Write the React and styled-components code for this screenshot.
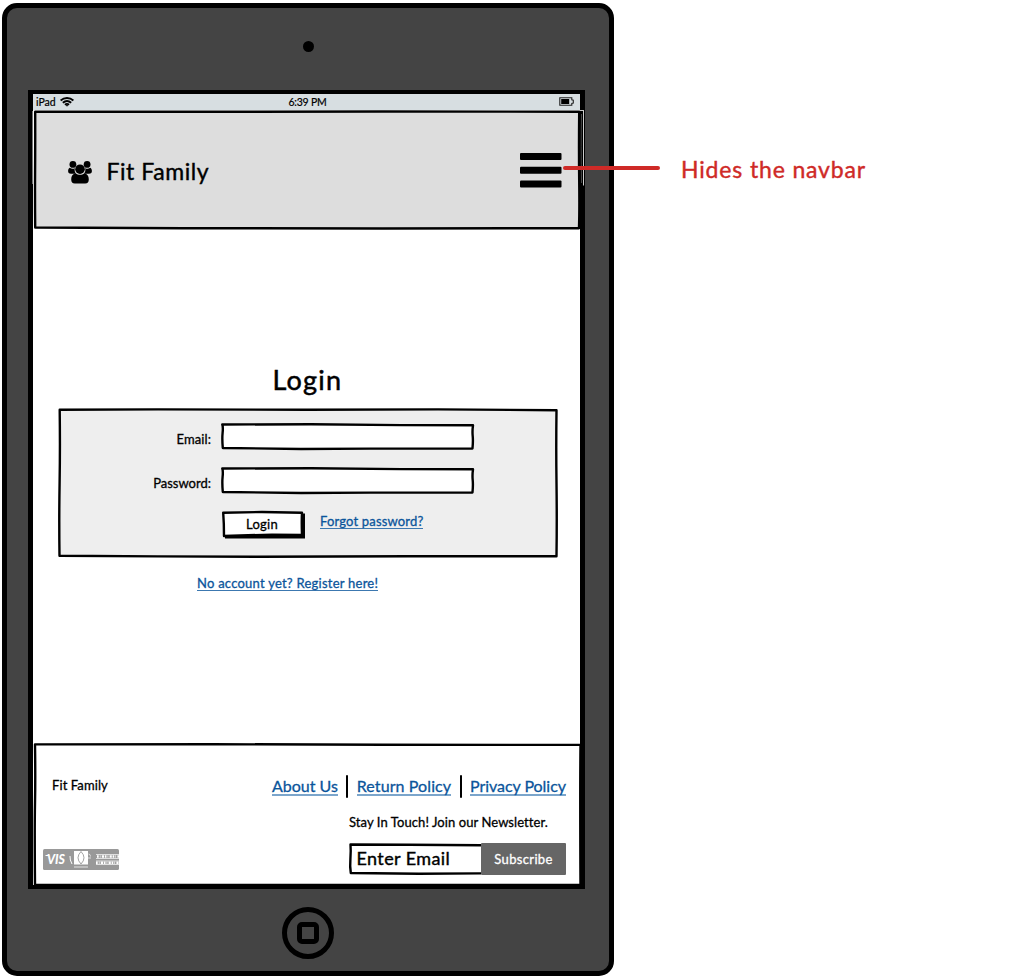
import React from "react";
import styled, { createGlobalStyle } from "styled-components";

const Global = createGlobalStyle`
  * { box-sizing: border-box; }
  body { margin: 0; background: #fff; color: #000; font-family: Lato, "Liberation Sans", sans-serif; }
`;

const Page = styled.div`
  display: flex;
  align-items: flex-start;
  padding: 3px 0 0 2px;
  width: 1025px;
  height: 978px;
  overflow: hidden;
`;

const Device = styled.div`
  display: flex;
  flex-direction: column;
  align-items: center;
  flex: none;
  width: 612px;
  height: 973px;
  border: 5px solid #000;
  border-radius: 15px;
  background: #444;
`;

const TopBezel = styled.div`
  display: flex;
  flex: none;
  height: 82px;
  padding: 32.5px 0 0 0;
`;

const Camera = styled.div`
  width: 11px;
  height: 11px;
  border-radius: 50%;
  background: #000;
`;

const Screen = styled.div`
  display: flex;
  flex-direction: column;
  flex: none;
  width: 557px;
  height: 799px;
  margin-right: 3px;
  border: 5px solid #000;
  border-width: 4px 5px;
  background: #fff;
`;

const HomeButton = styled.div`
  display: flex;
  align-items: center;
  justify-content: center;
  width: 52px;
  height: 52px;
  margin: 18px 1px 0 0;
  border: 5px solid #000;
  border-radius: 50%;
`;

const HomeGlyph = styled.div`
  width: 22px;
  height: 22px;
  border: 5px solid #000;
  border-radius: 5px;
`;

const Text = styled.span`
  display: block;
  font-size: ${(p) => p.$size}px;
  line-height: ${(p) => p.$line || 16}px;
  letter-spacing: ${(p) => p.$track || 0}px;
  color: ${(p) => p.$color || "#000"};
  -webkit-text-stroke: ${(p) => p.$stroke ?? 0.3}px currentColor;
  white-space: nowrap;
`;

const Link = styled.a`
  align-self: flex-start;
  font-size: ${(p) => p.$size}px;
  line-height: ${(p) => p.$line}px;
  letter-spacing: ${(p) => p.$track || 0}px;
  color: #0b559b;
  -webkit-text-stroke: 0.3px currentColor;
  border-bottom: ${(p) => p.$rule || 1}px solid ${(p) => (p.$rule ? "#7ba5cb" : "#3c78b0")};
  white-space: nowrap;
`;

const StatusBar = styled.div`
  display: grid;
  grid-template-columns: 1fr auto 1fr;
  align-items: center;
  flex: none;
  height: 16px;
  padding: 0 6px 1px 3px;
  background: #d7dee1;
`;

const StatusLeft = styled.div`
  display: flex;
  align-items: center;
  gap: 4px;
`;

const StatusRight = styled.div`
  display: flex;
  justify-content: flex-end;
`;

const Clock = styled(Text)`
  padding-left: 5px;
`;

const Sketched = styled.div`
  position: relative;
  isolation: isolate;
`;

const Outline = styled.svg`
  position: absolute;
  left: 0;
  top: 0;
  z-index: -1;
  overflow: visible;
`;

const Header = styled(Sketched)`
  display: flex;
  align-items: center;
  flex: none;
  height: 119px;
  padding: 3px 18px 0 35px;
`;

const Brand = styled.div`
  display: flex;
  align-items: center;
  gap: 14.5px;
  flex: 1;
`;

const BrandIcon = styled.span`
  display: flex;
  padding-top: 2px;
`;

const BrandName = styled(Text)`
  padding-bottom: 1px;
`;

const MenuButton = styled.button`
  display: flex;
  padding: 0 0 2px;
  border: 0;
  background: none;
`;

const Main = styled.main`
  display: flex;
  flex-direction: column;
  flex: none;
  height: 514px;
  padding-top: 132px;
`;

const Title = styled.h1`
  margin: 0 0 10px 239.5px;
  font-size: 27px;
  line-height: 37px;
  font-weight: 400;
  letter-spacing: 1.2px;
  -webkit-text-stroke: 0.5px currentColor;
`;

const Panel = styled(Sketched)`
  display: flex;
  flex-direction: column;
  width: 500px;
  height: 150px;
  margin-left: 25px;
  padding-top: 15px;
`;

const Field = styled.label`
  display: grid;
  grid-template-columns: 153px 253px;
  column-gap: 10px;
  height: 27px;
  margin-bottom: 17px;
  text-align: right;
`;

const FieldName = styled(Text)`
  padding-top: 8px;
`;

const Input = styled(Sketched)`
  height: 27px;
`;

const Actions = styled.div`
  display: flex;
  gap: 15px;
  padding-left: 164px;
`;

const ForgotLink = styled(Link)`
  padding-top: 4px;
`;

const Button = styled(Sketched)`
  width: 83px;
  height: 28px;
  padding: 5px 3px 0 0;
  text-align: center;
`;

const RegisterRow = styled.div`
  display: flex;
  padding: 19px 0 0 164px;
`;

const Footer = styled(Sketched)`
  display: flex;
  justify-content: space-between;
  flex: none;
  height: 142px;
  padding: 34px 14px 0 10px;
`;

const FooterLeft = styled.div`
  display: flex;
  flex-direction: column;
  justify-content: space-between;
  height: 93px;
`;

const FooterName = styled(Text)`
  padding-left: 9px;
`;

const FooterRight = styled.div`
  display: flex;
  flex-direction: column;
  width: 294px;
`;

const Links = styled.nav`
  display: flex;
  justify-content: space-between;
  height: 22px;
  padding-bottom: 3px;
`;

const Divider = styled.span`
  width: 2px;
  height: 23px;
  margin-top: -2px;
  border-radius: 1px;
  background: #000;
`;

const Newsletter = styled.div`
  display: flex;
  flex-direction: column;
  gap: 13px;
  margin-left: 77px;
  padding-top: 15px;
`;

const Subscribe = styled.div`
  display: flex;
  height: 32px;
`;

const EmailBox = styled(Sketched)`
  width: 132px;
  padding: 2.5px 0 0 7.5px;
`;

const SubscribeButton = styled.div`
  width: 85px;
  padding-top: 8px;
  border-radius: 1px;
  background: #666;
  text-align: center;
`;

const Note = styled.div`
  display: flex;
  align-items: center;
  gap: 21px;
  position: relative;
  margin: 149px 0 0 -51px;
`;

const Pointer = styled.div`
  width: 97px;
  height: 4px;
  margin-bottom: 2px;
  border-radius: 2px;
  background: #cf2a27;
`;

const WifiIcon = () => (
  <svg width="14" height="10" viewBox="0 0 14 10" fill="none" stroke="#000" strokeWidth="1.9">
    <path d="M.6 3.4C4.400.2 9.600.2 13.400 3.400" />
    <path d="M2.800 5.700C5.300 3.600 8.700 3.600 11.200 5.700" />
    <path d="M4.900 7.700c1.300-1 2.900-1 4.200 0" />
    <path d="M5.800 8 7 9.800 8.200 8z" fill="#000" stroke="none" />
  </svg>
);

const BatteryIcon = () => (
  <svg width="15" height="9" viewBox="0 0 15 9">
    <path d="M.8.8h12v2l1.500.3v3l-1.500.3v1.800h-12z" fill="none" stroke="#222" strokeWidth="1.100" />
    <path d="M2.200 2h8v5h-8z" />
  </svg>
);

const FamilyIcon = () => (
  <svg width="24" height="23" viewBox="0 0 24 23">
    <circle cx="4.900" cy="3.400" r="3.400" />
    <circle cx="19.100" cy="3.400" r="3.400" />
    <path d="M1.800 6.700C3.600 8.200 5.500 8.100 6.800 6.900c-.5 2.200 0 4.200 1.200 5.900H3C1 12.800.1 11.900.1 10.100.1 8.500.7 7.300 1.800 6.700z" />
    <path d="M22.200 6.700C20.400 8.200 18.500 8.100 17.200 6.900c.5 2.200 0 4.200-1.200 5.900H21c2 0 2.900-.9 2.900-2.700 0-1.600-.6-2.800-1.700-3.400z" />
    <circle cx="12" cy="8.200" r="4.800" />
    <path d="M7.600 12.200c2.700 2 6.100 2 8.800 0 2.800.4 4.400 2.700 4.400 6 0 2.900-1.200 4.400-3.600 4.400H6.800c-2.400 0-3.600-1.500-3.600-4.400 0-3.300 1.600-5.600 4.400-6z" />
  </svg>
);

const MenuIcon = () => (
  <svg width="42" height="35" viewBox="0 0 42 35">
    <rect x="0" y="0" width="41.500" height="7" rx="1" />
    <rect x="0" y="13.700" width="41.500" height="7" rx="1" />
    <rect x="0" y="27.400" width="41.500" height="7" rx="1" />
  </svg>
);

const CardsIcon = () => (
  <svg width="76" height="21" viewBox="0 0 76 21">
    <rect width="76" height="21" rx="1.500" fill="#999" />
    <text x="4" y="15" fontFamily="Lato, sans-serif" fill="#fff" fontSize="12.500" fontWeight="900" fontStyle="italic" textLength="18" lengthAdjust="spacingAndGlyphs">VIS</text>
    <path d="M2.500 6.500h3M27 7q-.3 4 2 8" stroke="#fff" fill="none" />
    <rect x="31" y="2" width="14" height="13.500" fill="#fff" />
    <path d="M38 2.500q-6 6.300 0 12.500 6-6.200 0-12.500z" fill="none" stroke="#999" strokeWidth=".9" />
    <path d="M31 18h14" stroke="#ccc" strokeWidth="1.500" />
    <path d="M45.500 5q2 0 2 2.500M45 9h3" stroke="#ddd" fill="none" />
    <g stroke="#fff" fill="none">
      <path d="M53 5.500h23M53 9.500h23M53 12h23M53 15.500h23" strokeWidth=".7" />
      <path d="M54 7.500h22M53 13.700h23" strokeWidth="2.500" strokeDasharray="1.700 1.100 .7 1.300 2.200 .8" />
    </g>
  </svg>
);

const InputOutline = () => (
  <Outline width="253" height="27" viewBox="0 0 253 27">
    <path d="M1.300 1.500 90 1.300 180 2.100 252 2.300Q251.200 8 251.700 13T251.500 25.500L150 25.600 80 26 1.800 25Q1 16 1.600 10T1.300 1.500z" fill="#fff" stroke="#000" strokeWidth="2.400" strokeLinejoin="round" />
  </Outline>
);

export default function App() {
  return (
    <Page>
      <Global />
      <Device>
        <TopBezel><Camera /></TopBezel>
        <Screen>
          <StatusBar>
            <StatusLeft>
              <Text $size={10.5} $line={14} $stroke={0.2}>iPad</Text>
              <WifiIcon />
            </StatusLeft>
            <Clock $size={10.5} $line={14} $track={-0.2} $stroke={0.2}>6:39 PM</Clock>
            <StatusRight><BatteryIcon /></StatusRight>
          </StatusBar>
          <Header as="header">
            <Outline width="547" height="119" viewBox="0 0 547 119">
              <path d="M547 0h4v75.500h-1V1h-3z" fill="#ccc" />
              <path d="M546 1.200h4v73.800h-4z" fill="#000" />
              <path d="M548.500 4Q547.800 35 548.500 73" fill="none" stroke="#555" strokeWidth=".9" />
              <path d="M-.3 1V74" stroke="#ccc" strokeWidth=".7" />
              <path d="M2.200 1.700 180 1.800 350 1.500 546.200 1.700Q545.800 40 546.200 70T546 118.200L350 118.500 150 118.200 2.200 117.500Q1.900 85 2.100 60T2.200 1.700z" fill="#ddd" stroke="#000" strokeWidth="2.400" strokeLinejoin="round" />
            </Outline>
            <Brand>
              <BrandIcon><FamilyIcon /></BrandIcon>
              <BrandName $size={23} $line={30} $track={0.55} $stroke={0.4}>Fit Family</BrandName>
            </Brand>
            <MenuButton aria-label="Menu"><MenuIcon /></MenuButton>
          </Header>
          <Main>
            <Title>Login</Title>
            <Panel>
              <Outline width="500" height="150" viewBox="0 0 500 150">
                <path d="M1.700 1.800 100 1.400 250 1.700 380 1.400 498.500 2.200Q498 40 498.500 75T498.500 148.300L350 148.300 200 148.700 100 148.400 1.500 147.800Q1 110 1.600 75T1.700 1.800z" fill="#eee" stroke="#000" strokeWidth="2.400" strokeLinejoin="round" />
              </Outline>
              <Field>
                <FieldName $size={13} $track={0.1}>Email:</FieldName>
                <Input><InputOutline /></Input>
              </Field>
              <Field>
                <FieldName $size={13}>Password:</FieldName>
                <Input><InputOutline /></Input>
              </Field>
              <Actions>
                <Button>
                  <Outline width="83" height="28" viewBox="0 0 83 28">
                    <path d="M3 24 79 2.500h4V27.500H3z" />
                    <path d="M1.200 1.700 40 1 80 1.800Q79.500 10 80 24L50 23.600 2 25Q2 12 1.200 1.700z" fill="#fff" stroke="#000" strokeWidth="2.400" strokeLinejoin="round" />
                  </Outline>
                  <Text $size={13} $track={0.3}>Login</Text>
                </Button>
                <ForgotLink $size={13} $line={13} $track={0.17}>Forgot password?</ForgotLink>
              </Actions>
            </Panel>
            <RegisterRow>
              <Link $size={13} $line={13} $track={0.24}>No account yet? Register here!</Link>
            </RegisterRow>
          </Main>
          <Footer as="footer">
            <Outline width="547" height="142" viewBox="0 0 547 142">
              <path d="M2 1.400 180 1.200 350 1.700 547.500 1.900Q547 50 547.500 142L2 142Q1.500 85 2 60T2 1.400z" fill="#fff" stroke="#000" strokeWidth="2.400" strokeLinejoin="round" />
            </Outline>
            <FooterLeft>
              <FooterName $size={13} $track={0.1}>Fit Family</FooterName>
              <CardsIcon />
            </FooterLeft>
            <FooterRight>
              <Links>
                <Link $size={16} $line={17} $rule={2}>About Us</Link>
                <Divider />
                <Link $size={16} $line={17} $rule={2} $track={0.1}>Return Policy</Link>
                <Divider />
                <Link $size={16} $line={17} $rule={2} $track={-0.04}>Privacy Policy</Link>
              </Links>
              <Newsletter>
                <Text $size={13} $track={0.08}>Stay In Touch! Join our Newsletter.</Text>
                <Subscribe>
                  <EmailBox>
                    <Outline width="132" height="32" viewBox="0 0 132 32">
                      <path d="M132 2.200 60 1.800 1.500 1.500Q2 8 1.400 16T1.800 30L70 30.800 132 30.400" fill="#fff" stroke="#000" strokeWidth="2.400" strokeLinejoin="round" />
                    </Outline>
                    <Text $size={18} $line={24} $track={0.4} $stroke={0.4}>Enter Email</Text>
                  </EmailBox>
                  <SubscribeButton>
                    <Text $size={13} $track={0.35} $color="#fff">Subscribe</Text>
                  </SubscribeButton>
                </Subscribe>
              </Newsletter>
            </FooterRight>
          </Footer>
        </Screen>
        <HomeButton><HomeGlyph /></HomeButton>
      </Device>
      <Note>
        <Pointer />
        <Text $size={23} $line={34} $color="#cf2a27" $track={0.85} $stroke={0.4}>Hides the navbar</Text>
      </Note>
    </Page>
  );
}
